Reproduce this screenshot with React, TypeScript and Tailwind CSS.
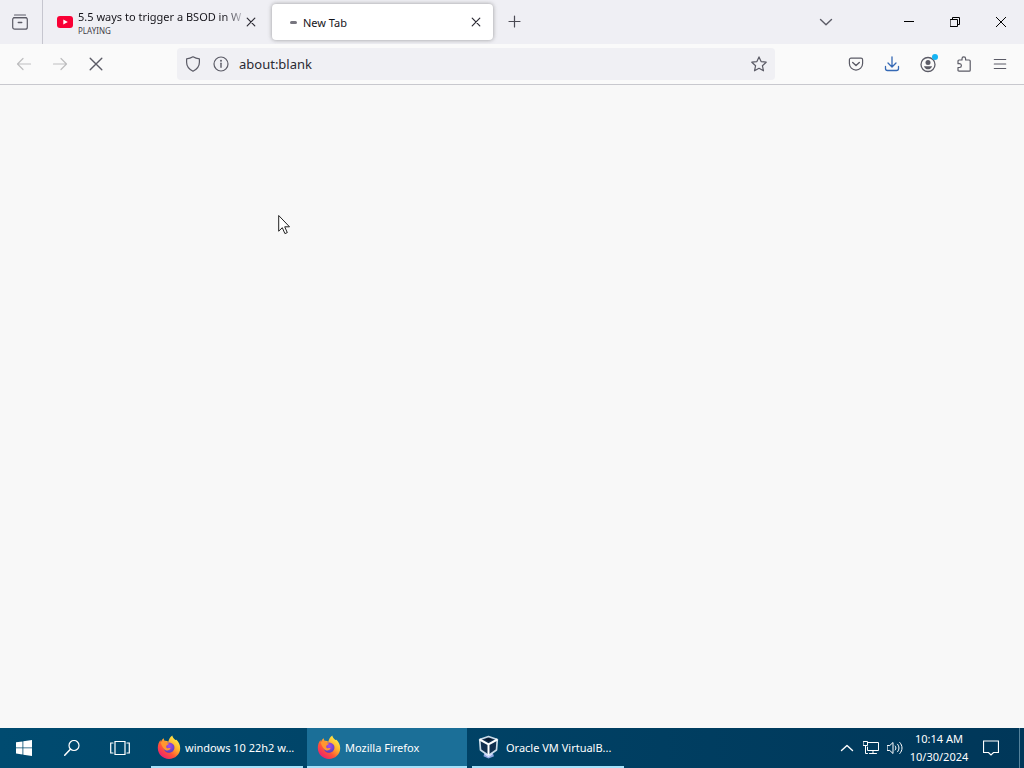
import type { ReactNode } from "react";

function Icon({ children, size = 16, className = "" }: { children: ReactNode; size?: number; className?: string }) {
  return (
    <svg
      width={size}
      height={size}
      viewBox={`0 0 ${size} ${size}`}
      fill="none"
      stroke="currentColor"
      strokeWidth="1.2"
      strokeLinecap="round"
      strokeLinejoin="round"
      aria-hidden="true"
      className={`shrink-0 ${className}`}
    >
      {children}
    </svg>
  );
}

function ToolButton({ label, className = "text-[#5b5b66]", children }: { label: string; className?: string; children: ReactNode }) {
  return (
    <button type="button" aria-label={label} className={`flex h-8 w-9 shrink-0 items-center justify-center ${className}`}>
      {children}
    </button>
  );
}

function CloseTab() {
  return (
    <button type="button" aria-label="Close tab" className="flex size-4 shrink-0 items-center justify-center text-[#2b2a33]">
      <Icon>
        <path d="M4.2 4.2 11.8 11.8M11.8 4.2 4.2 11.8" />
      </Icon>
    </button>
  );
}

function WindowButton({ label, children }: { label: string; children: ReactNode }) {
  return (
    <button type="button" aria-label={label} className="flex h-full w-[46px] items-center justify-center text-black">
      {children}
    </button>
  );
}

function TabStrip() {
  return (
    <header className="flex h-11 shrink-0 items-center bg-[#efeff4]">
      <button type="button" aria-label="Firefox View" className="flex h-full w-[43px] shrink-0 items-center justify-center border-r border-[#c6c6cf] pr-0.5 text-[#5b5b66]">
        <Icon size={18}>
          <path d="M3.5 2h11M2.8 4.6h12.4" />
          <rect x="1.7" y="4.6" width="14.6" height="11.6" rx="2" />
          <path d="M7.3 9.5h3.4" strokeWidth="1.5" />
        </Icon>
      </button>
      <div className="flex h-9 w-[229px] shrink-0 items-center pl-3.5">
        <svg width="16" height="12" viewBox="0 0 16 12" className="shrink-0" aria-hidden="true">
          <rect width="16" height="12" rx="3" fill="#f90035" />
          <path d="M6.3 3.4v5.2L10.8 6z" fill="#fff" />
        </svg>
        <div className="ml-[5px] w-[165px] overflow-hidden pt-0.5 whitespace-nowrap">
          <div className="bg-linear-to-r from-[#15141a] from-88% to-[#c6c6cf] bg-clip-text text-[11px] leading-4 text-transparent">5.5 ways to trigger a BSOD in W</div>
          <div className="text-[8px] leading-3 text-[#3f3e48]">PLAYING</div>
        </div>
        <CloseTab />
      </div>
      <div className="flex h-9 w-[221px] shrink-0 items-center rounded bg-white pr-[9px] pl-[18px] shadow-[0_0_4px_rgba(80,80,80,0.55)]">
        <span className="h-[3px] w-[7px] rounded-full bg-[#77767f]" />
        <span className="ml-1.5 flex-1 pt-0.5 text-[11px] leading-4 text-[#15141a]">New Tab</span>
        <CloseTab />
      </div>
      <button type="button" aria-label="Open a new tab" className="ml-1 flex size-9 items-center justify-center text-[#4b4a54]">
        <Icon>
          <path d="M7.5 2v11M2 7.5h11" />
        </Icon>
      </button>
      <button type="button" aria-label="List all tabs" className="mr-[42px] ml-auto flex size-9 items-center justify-center text-[#5b5b66]">
        <Icon>
          <path d="m2.5 5.5 5.5 5.2 5.5-5.2" strokeWidth="1.4" />
        </Icon>
      </button>
      <div className="flex h-full">
        <WindowButton label="Minimize">
          <Icon size={10}>
            <path d="M0 4.5h10" strokeWidth="1" strokeLinecap="butt" />
          </Icon>
        </WindowButton>
        <WindowButton label="Restore">
          <Icon size={10}>
            <path d="M.5 2.5h7v7h-7zM2.5 2.5v-2h7v7h-2" strokeWidth="1" strokeLinejoin="miter" />
          </Icon>
        </WindowButton>
        <WindowButton label="Close">
          <Icon size={10}>
            <path d="m0 0 10 10M10 0 0 10" strokeWidth="1" />
          </Icon>
        </WindowButton>
      </div>
    </header>
  );
}

function Toolbar() {
  return (
    <nav aria-label="Navigation" className="flex h-[41px] shrink-0 items-center border-b border-[#c8c8ce] bg-[#fafafa] px-1.5">
      <ToolButton label="Back" className="text-[#bdbdbf]">
        <Icon>
          <path d="M14.5 8h-13M7 2.5 1.5 8 7 13.5" />
        </Icon>
      </ToolButton>
      <ToolButton label="Forward" className="text-[#bdbdbf]">
        <Icon>
          <path d="M1.5 8h13M9 2.5 14.5 8 9 13.5" />
        </Icon>
      </ToolButton>
      <ToolButton label="Stop">
        <Icon>
          <path d="m2.2 2.2 11.6 11.6M13.8 2.2 2.2 13.8" strokeWidth="1.4" />
        </Icon>
      </ToolButton>
      <div className="mx-[63px] flex h-8 min-w-0 flex-1 items-center rounded bg-[#f0f0f4] px-2 text-[#5b5b66]">
        <Icon>
          <path d="M8 .8c2 1.3 4 1.9 6.4 2v3.4c0 4.3-2.4 7-6.4 9-4-2-6.4-4.7-6.4-9V2.8C4 2.7 6 2.1 8 .8z" />
        </Icon>
        <Icon className="ml-3">
          <circle cx="8" cy="8" r="7" />
          <path d="M8 7.2v4" strokeWidth="1.4" />
          <circle cx="8" cy="4.7" r=".4" fill="currentColor" />
        </Icon>
        <input
          type="text"
          aria-label="Search or enter address"
          defaultValue="about:blank"
          className="ml-2.5 min-w-0 flex-1 bg-transparent pt-0.5 text-[13px] text-[#2b2a33] outline-none"
        />
        <button type="button" aria-label="Bookmark this page" className="flex size-4 items-center justify-center">
          <Icon>
            <path d="m8 .9 2.1 4.7 5.1.6-3.8 3.5 1.1 5.1L8 12.300l-4.500 2.500 1.100-5.100L.8 6.200l5.100-.6z" />
          </Icon>
        </button>
      </div>
      <ToolButton label="Save to Pocket">
        <Icon>
          <path d="M3 2.200h10c.9 0 1.600.7 1.600 1.600v3.700a6.600 6.600 0 0 1-13.200 0V3.800c0-.9.7-1.600 1.600-1.600z" />
          <path d="M4.700 6.500 8 9.500l3.300-3" strokeWidth="1.400" />
        </Icon>
      </ToolButton>
      <ToolButton label="Downloads" className="text-[#3569b5]">
        <Icon>
          <path d="M8 .8v10M4 7l4 4 4-4M1.500 10.500v2c0 1.200.8 2 2 2h9c1.200 0 2-.8 2-2v-2" strokeWidth="1.300" />
        </Icon>
      </ToolButton>
      <ToolButton label="Account">
        <Icon size={20}>
          <circle cx="10" cy="10.500" r="7" strokeWidth="1.300" />
          <circle cx="10" cy="8.500" r="2.500" fill="currentColor" stroke="none" />
          <path d="M5.900 12.200h8.200c-.7 2.100-2.200 3.100-4.100 3.100s-3.400-1-4.100-3.100z" fill="currentColor" stroke="none" />
          <circle cx="17" cy="3" r="3" fill="#14b4f4" stroke="none" />
        </Icon>
      </ToolButton>
      <ToolButton label="Extensions">
        <Icon>
          <path d="M2 5c0-.7.4-1 1-1h3V2.700a1.800 1.800 0 0 1 3.600 0V4h3.600c.7 0 1 .4 1 1v9.200c0 .6-.3 1-1 1H3c-.6 0-1-.4-1-1v-2.700h1.500a1.900 1.900 0 0 0 0-3.800H2z" />
        </Icon>
      </ToolButton>
      <ToolButton label="Open application menu">
        <Icon>
          <path d="M2.300 3.500h11.400M2.300 8h11.400M2.300 12.500h11.400" />
        </Icon>
      </ToolButton>
    </nav>
  );
}

function FirefoxLogo({ id }: { id: string }) {
  return (
    <svg width="24" height="24" viewBox="0 0 24 24" className="shrink-0" aria-hidden="true">
      <defs>
        <linearGradient id={`${id}-flame`} x1="20" y1="3" x2="4" y2="22" gradientUnits="userSpaceOnUse">
          <stop offset="0" stopColor="#fff04a" />
          <stop offset=".35" stopColor="#ffb02c" />
          <stop offset=".65" stopColor="#ff5634" />
          <stop offset="1" stopColor="#ed1c75" />
        </linearGradient>
        <radialGradient id={`${id}-globe`} cx=".5" cy=".35" r=".65">
          <stop offset="0" stopColor="#a64bea" />
          <stop offset="1" stopColor="#5940bd" />
        </radialGradient>
      </defs>
      <path
        d="M15.300.4c.2 2 1.700 3.200 3.100 4.500l1-.1c2.300 2.200 3.800 5.200 3.800 8.500C23.200 19.300 18.200 24 12 24S.8 19.300.8 13.100c0-3.400 1-6.100 2.700-8.100l.4 1.900c.7-1.500 1.500-2.700 2.800-3.600.1 1.100.5 1.900 1.100 2.600 1.200-.2 2.500.1 3.500.8C11.900 4.300 13 2 15.300.4z"
        fill={`url(#${id}-flame)`}
      />
      <path d="M8.300 8.700c2.500-2 6.800-1.500 8.500 1.300 1.600 2.800.1 6.700-3.200 7.500-3.500.9-6.700-1.500-6.900-4.600z" fill={`url(#${id}-globe)`} />
      <path d="M3.700 7.200c1.500-.7 3-.8 4.400-.3 1 .4 1.800 1.300 3.900 1.500-.4 1.300-2 1.500-2.600 2.400-.4.700-.3 1.400.2 1.900 1.100 1 2.500.1 3.600.5.500.2.500.6.200.9-1.100 1.200-2.600 1.800-4.100 1.300-2.700-.9-4.500-4-5.600-8.200z" fill="#ff9630" />
    </svg>
  );
}

function VirtualBoxLogo() {
  return (
    <svg width="24" height="24" viewBox="0 0 24 24" className="shrink-0" strokeLinejoin="round" aria-hidden="true">
      <path d="M6.500 17.500h8l1.500 3.700-5.500 2.300-5-2.300z" fill="#8fa6e0" />
      <path d="M10.500 1.500 19.300 4.500 18.500 15l-8 5.500-8-5.500L1.700 4.500z" fill="#12304f" stroke="#c9dbe8" strokeWidth="1.700" />
      <path d="m1.700 4.500 8.800 4.800 8.800-4.800M10.500 9.300v11" fill="none" stroke="#fff" strokeWidth="2" />
      <path d="m6.500 4.500 4-1.500 4 1.500-4 2z" fill="#07172b" />
      <path d="m7 19 3.500 2.500L14 19" fill="none" stroke="#d5dfff" strokeWidth="1.500" />
    </svg>
  );
}

function TaskButton({ label, icon, active = false, className }: { label: string; icon: ReactNode; active?: boolean; className: string }) {
  return (
    <button
      type="button"
      className={`flex h-full min-w-0 items-center border-b-2 border-[#a4e2fb] text-left text-[11px] leading-4 text-white ${active ? "bg-[#1b6f98] pl-2.5" : "pl-1.5"} ${className}`}
    >
      {icon}
      <span className="ml-1 pt-0.5 whitespace-nowrap">{label}</span>
    </button>
  );
}

function Taskbar() {
  return (
    <footer className="flex h-10 shrink-0 items-center bg-linear-to-r from-[#004b70] to-[#003759] text-white">
      <button type="button" aria-label="Start" className="flex h-full w-12 shrink-0 items-center justify-center">
        <svg width="16" height="16" viewBox="0 0 16 16" fill="currentColor" aria-hidden="true">
          <path d="M0 2.300 6.500 1.400v6.100H0zM7.300 1.300 16 0v7.500H7.300zM0 8.300h6.500v6.200L0 13.600zM7.300 8.300H16V16l-8.700-1.300z" />
        </svg>
      </button>
      <button type="button" aria-label="Search" className="flex h-full w-12 shrink-0 items-center justify-center">
        <Icon>
          <circle cx="10" cy="5.500" r="5" />
          <path d="M6.400 9.200.7 15.300" strokeWidth="1.500" />
        </Icon>
      </button>
      <button type="button" aria-label="Task View" className="flex h-full w-12 shrink-0 items-center justify-center">
        <Icon size={20}>
          <path d="M5 3.500h10v13H5zM3 5H.7v10H3M17 5h2.300v10H17" strokeLinejoin="miter" />
        </Icon>
      </button>
      <div className="ml-[7px] flex h-full">
        <TaskButton label="windows 10 22h2 w..." icon={<FirefoxLogo id="first" />} className="w-[152px]" />
        <TaskButton label="Mozilla Firefox" icon={<FirefoxLogo id="second" />} active className="ml-1 w-40" />
        <TaskButton label="Oracle VM VirtualB..." icon={<VirtualBoxLogo />} className="ml-[5px] w-[152px]" />
      </div>
      <div className="ml-auto flex h-full items-center">
        <button type="button" aria-label="Show hidden icons" className="flex h-full w-6 items-center justify-center">
          <Icon>
            <path d="m2.500 10.500 5.500-5 5.500 5" strokeWidth="1.400" />
          </Icon>
        </button>
        <button type="button" aria-label="Network" className="flex h-full w-6 items-center justify-center">
          <Icon>
            <path d="M5 2.500h10.500v8H4.500V7M10 10.500v3M6.500 13.500h7M.5 1.500h4v4h-4zM2.500 5.500v8h2" strokeWidth="1" strokeLinejoin="miter" />
          </Icon>
        </button>
        <button type="button" aria-label="Volume" className="flex h-full w-6 items-center justify-center">
          <Icon>
            <path d="M.5 5.500h2.300L6 2.500v11l-3.200-3H.5zM8.200 6c1 1.200 1 2.800 0 4M10.500 4.200c2 2.200 2 5.400 0 7.600M12.800 2.500c3 3.200 3 7.800 0 11" strokeWidth="1" />
          </Icon>
        </button>
        <button type="button" className="flex h-full w-16 flex-col items-center justify-center text-[11px] leading-[18px] whitespace-nowrap">
          <span>10:14 AM</span>
          <span>10/30/2024</span>
        </button>
        <button type="button" aria-label="Notifications" className="flex h-full w-10 items-center justify-center">
          <Icon>
            <path d="M.5 1h15v11.500h-5L8 15l-2.500-2.500h-5z" strokeLinejoin="miter" />
          </Icon>
        </button>
        <button type="button" aria-label="Show desktop" className="ml-2 h-full w-[5px] border-l border-[#55829b]" />
      </div>
    </footer>
  );
}

export default function App() {
  return (
    <div className="relative flex min-h-screen flex-col bg-[#f9f9fb] font-['Noto_Sans','Open_Sans',sans-serif]">
      <TabStrip />
      <Toolbar />
      <main className="flex-1 bg-[#f8f8f8]" />
      <Taskbar />
      <svg width="13" height="21" viewBox="0 0 13 21" className="pointer-events-none absolute top-[214px] left-[278px]" aria-hidden="true">
        <path d="M.7 1.500v15.700l3.600-3.500 2.600 5.900 2.400-1-2.600-5.800h4.800z" fill="#fff" stroke="#222" strokeWidth="1" />
      </svg>
    </div>
  );
}
